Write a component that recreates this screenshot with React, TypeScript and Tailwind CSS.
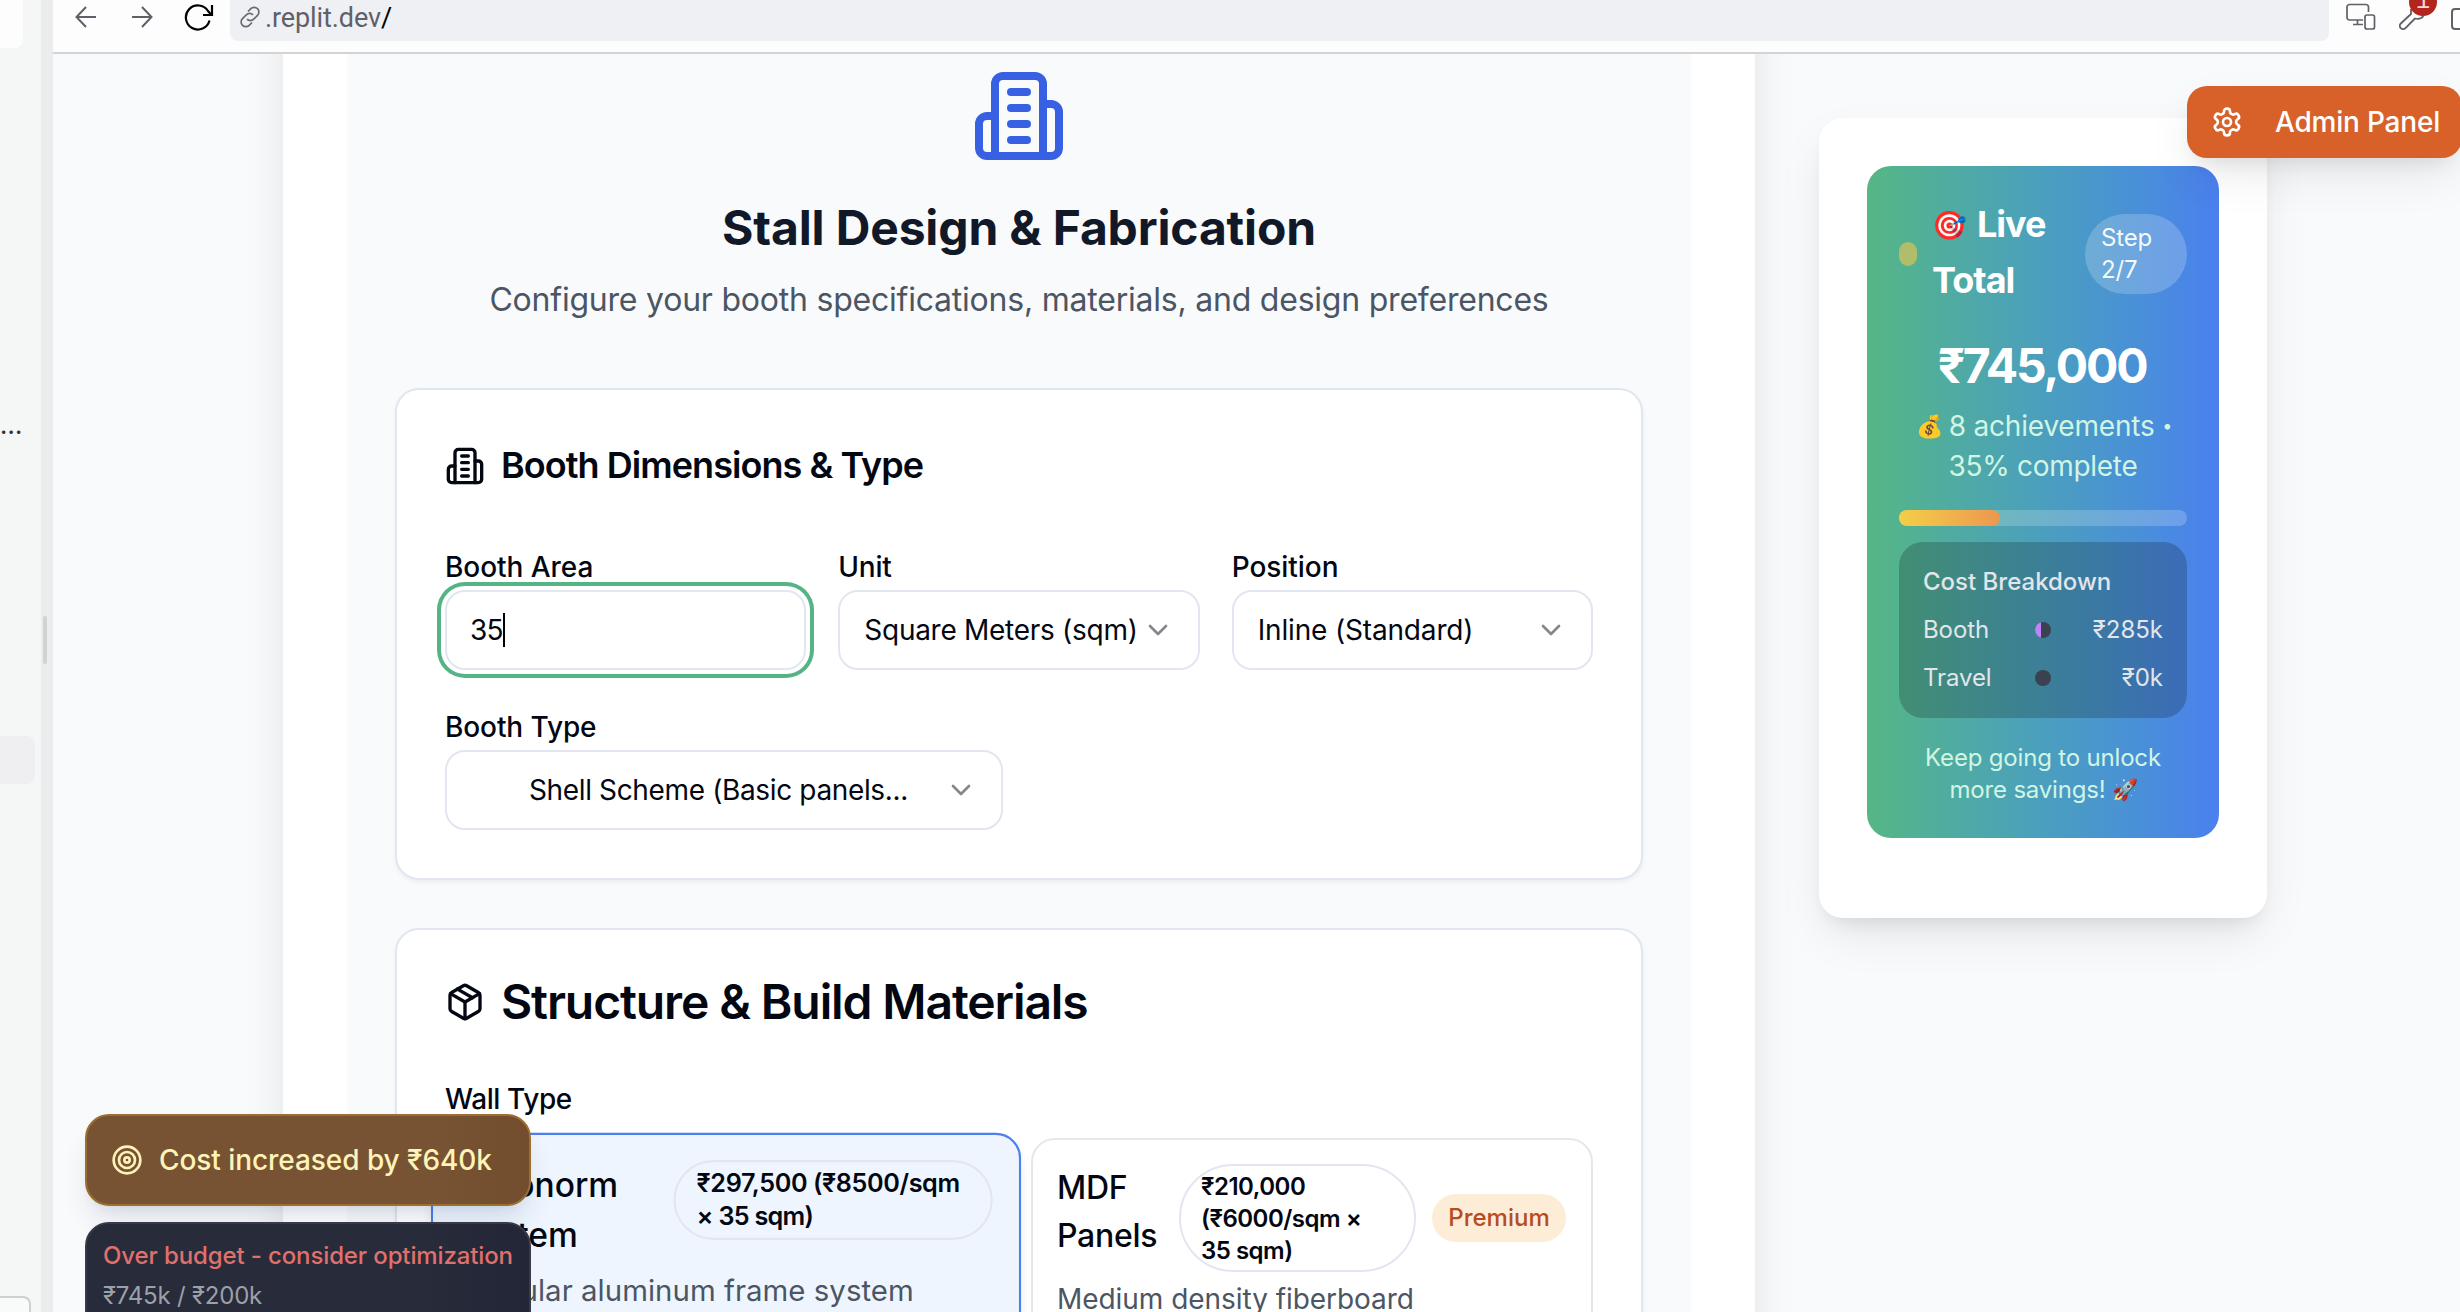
import type { ReactNode } from "react";

const CARD =
  "rounded-[24px] border-2 border-[#e2e6f0] bg-white shadow-[0_2px_4px_rgba(0,0,0,0.06)]";
const SHADOW_XL =
  "shadow-[0_20px_50px_-8px_rgba(0,0,0,0.1),0_12px_20px_-10px_rgba(0,0,0,0.1)]";

function Building({ className }: { className: string }) {
  return (
    <svg
      viewBox="0 0 24 24"
      fill="none"
      stroke="currentColor"
      strokeWidth="2"
      strokeLinecap="round"
      strokeLinejoin="round"
      className={className}
    >
      <path d="M6 22V4a2 2 0 0 1 2-2h8a2 2 0 0 1 2 2v18Z" />
      <path d="M6 12H4a2 2 0 0 0-2 2v6a2 2 0 0 0 2 2h2" />
      <path d="M18 9h2a2 2 0 0 1 2 2v9a2 2 0 0 1-2 2h-2" />
      <path d="M10 6h4M10 10h4M10 14h4M10 18h4" />
    </svg>
  );
}

function PackageBox({ className }: { className: string }) {
  return (
    <svg
      viewBox="0 0 24 24"
      fill="none"
      stroke="currentColor"
      strokeWidth="2"
      strokeLinecap="round"
      strokeLinejoin="round"
      className={className}
    >
      <path d="M11 21.73a2 2 0 0 0 2 0l7-4A2 2 0 0 0 21 16V8a2 2 0 0 0-1-1.73l-7-4a2 2 0 0 0-2 0l-7 4A2 2 0 0 0 3 8v8a2 2 0 0 0 1 1.73z" />
      <path d="M12 22V12" />
      <path d="m3.3 7 8.7 5 8.7-5" />
      <path d="m7.5 4.27 9 5.15" />
    </svg>
  );
}

function Gear() {
  return (
    <svg
      viewBox="0 0 24 24"
      fill="none"
      stroke="currentColor"
      strokeWidth="2"
      strokeLinecap="round"
      strokeLinejoin="round"
      className="size-[32px] shrink-0"
    >
      <path d="M12.22 2h-.44a2 2 0 0 0-2 2v.18a2 2 0 0 1-1 1.73l-.43.25a2 2 0 0 1-2 0l-.15-.08a2 2 0 0 0-2.73.73l-.22.38a2 2 0 0 0 .73 2.73l.15.1a2 2 0 0 1 1 1.72v.51a2 2 0 0 1-1 1.74l-.15.09a2 2 0 0 0-.73 2.73l.22.38a2 2 0 0 0 2.73.73l.15-.08a2 2 0 0 1 2 0l.43.25a2 2 0 0 1 1 1.73V20a2 2 0 0 0 2 2h.44a2 2 0 0 0 2-2v-.18a2 2 0 0 1 1-1.73l.43-.25a2 2 0 0 1 2 0l.15.08a2 2 0 0 0 2.73-.73l.22-.39a2 2 0 0 0-.73-2.73l-.15-.08a2 2 0 0 1-1-1.74v-.5a2 2 0 0 1 1-1.74l.15-.09a2 2 0 0 0 .73-2.73l-.22-.38a2 2 0 0 0-2.73-.73l-.15.08a2 2 0 0 1-2 0l-.43-.25a2 2 0 0 1-1-1.73V4a2 2 0 0 0-2-2z" />
      <circle cx="12" cy="12" r="3" />
    </svg>
  );
}

function Chevron() {
  return (
    <svg
      viewBox="0 0 24 24"
      fill="none"
      stroke="#85878d"
      strokeWidth="2"
      strokeLinecap="round"
      strokeLinejoin="round"
      className="size-[32px] shrink-0"
    >
      <path d="m6 9 6 6 6-6" />
    </svg>
  );
}

function Sidebar() {
  return (
    <div className="flex h-full w-[41px] shrink-0 flex-col overflow-hidden bg-[#f5f7f6]">
      <div className="h-[48px] w-[23px] shrink-0 rounded-br-[8px] bg-[#fcfdfc]" />
      <div className="mt-[366px] h-[24px] shrink-0 text-[24px] leading-[24px] font-medium tracking-[0.2px] text-[#2f3237]">
        ...
      </div>
      <div className="mt-[298px] h-[48px] w-[35px] shrink-0 rounded-r-[8px] bg-[#efeff2]" />
      <div className="mt-[512px] h-[30px] w-[31px] shrink-0 rounded-tr-[8px] border-t-2 border-r-2 border-[#cfcfcf] bg-[#f9fafa]" />
    </div>
  );
}

function Toolbar() {
  return (
    <div className="flex h-[54px] shrink-0 items-start border-b-2 border-[#d4d4d4] bg-[#fdfdfd] pl-[22px]">
      <svg viewBox="0 0 22 22" fill="none" stroke="#5f6068" strokeWidth="2" className="mt-[6px] size-[22px] shrink-0">
        <path d="M21 11H1.5M11 1 1.5 11l9.5 10" />
      </svg>
      <svg viewBox="0 0 22 22" fill="none" stroke="#5f6068" strokeWidth="2" className="mt-[6px] ml-[34px] size-[22px] shrink-0">
        <path d="M1 11h19.500M11 1l9.500 10L11 21" />
      </svg>
      <svg viewBox="0 0 30 28" fill="none" stroke="#000" strokeWidth="2.2" className="mt-[3px] ml-[31px] h-[28px] w-[30px] shrink-0">
        <path d="M25.500 17.500A12 12 0 1 1 24 8l3 3.500" />
        <path d="M28 2v10H19" />
      </svg>
      <div className="ml-[16px] flex h-[41px] w-[2099px] shrink-0 items-start rounded-b-[8px] bg-[#eff0f3] pl-[9px]">
        <svg viewBox="0 0 22 22" fill="none" stroke="#6a6b72" strokeWidth="1.7" className="mt-[6px] size-[22px] shrink-0">
          <path d="M9 5.500 11.800 2.700a4.700 4.700 0 0 1 6.700 0 4.700 4.700 0 0 1 0 6.700l-3.800 3.800a4.700 4.700 0 0 1-6.700 0" />
          <path d="M13 16.500 10.200 19.300a4.700 4.700 0 0 1-6.700 0 4.700 4.700 0 0 1 0-6.700l3.800-3.800a4.700 4.700 0 0 1 6.700 0" />
        </svg>
        <div className="mt-px ml-[4px] font-['Roboto',sans-serif] text-[27px] leading-[34px] tracking-[-0.1px] text-[#5f6068]">
          .replit.dev<span className="text-black">/</span>
        </div>
      </div>
      <svg viewBox="0 0 30 28" fill="none" stroke="#5f6068" strokeWidth="1.7" className="mt-[3px] ml-[17px] h-[28px] w-[30px] shrink-0">
        <path d="M22.500 9V4a2.500 2.500 0 0 0-2.500-2.500H3.500A2.500 2.500 0 0 0 1 4v10.500A2.500 2.500 0 0 0 3.500 17H17M11.500 17v4.500M7 21.500h10" />
        <rect x="19" y="12" width="9.500" height="14" rx="2" />
      </svg>
      <div className="relative ml-[23px] h-[32px] w-[40px] shrink-0">
        <svg viewBox="0 0 32 32" fill="none" stroke="#5f6068" strokeWidth="1.8" strokeLinejoin="round" className="size-[32px]">
          <path d="M12 9 12 14 1.800 23.500a3.300 3.300 0 0 0 4.700 4.700L16 18.500c3 .8 6 .5 8.500-2.500" />
        </svg>
        <div className="absolute -top-[12px] left-[10px] flex size-[28px] items-center justify-center rounded-full bg-[#b3261e]">
          <span className="font-['Liberation_Mono',monospace] text-[24px] leading-[26px] text-[#f9d9d7]">1</span>
        </div>
      </div>
      <div className="mt-[8px] ml-[12px] h-[22px] w-[30px] shrink-0 rounded-[4px] border-2 border-[#5f6068]" />
    </div>
  );
}

function Label({ className, children }: { className: string; children: ReactNode }) {
  return <div className={`pt-px text-[28px] leading-[28px] font-medium ${className}`}>{children}</div>;
}

function SelectBox({ className, children }: { className: string; children: ReactNode }) {
  return (
    <div
      className={`mt-[9px] flex h-[80px] items-center justify-between rounded-[20px] border-2 border-[#e2e6f0] bg-white pr-[24px] pl-[24px] text-[28px] leading-[40px] whitespace-nowrap ${className}`}
    >
      {children}
      <Chevron />
    </div>
  );
}

function BoothCard() {
  return (
    <div className={`mt-[64px] h-[492px] shrink-0 px-[48px] pt-[46px] ${CARD}`}>
      <div className="flex h-[56px] items-center">
        <Building className="mt-[4px] size-[40px]" />
        <h3 className="mt-px ml-[16px] text-[36px] leading-[56px] font-semibold tracking-[-0.95px]">
          Booth Dimensions &amp; Type
        </h3>
      </div>
      <div className="mt-[60px] grid grid-cols-3 gap-[32px]">
        <div>
          <Label className="tracking-[-0.05px]">Booth Area</Label>
          <div className="mt-[9px] flex h-[80px] items-center rounded-[20px] border-2 border-[#e2e6f0] bg-white pl-[23px] text-[28px] leading-[40px] tracking-[-0.8px] ring-4 ring-[#55b485] ring-offset-4 ring-offset-white">
            35
            <span className="h-[34px] w-[2px] bg-black" />
          </div>
        </div>
        <div>
          <Label className="tracking-[-0.2px]">Unit</Label>
          <SelectBox className="tracking-[-0.28px]">Square Meters (sqm)</SelectBox>
        </div>
        <div>
          <Label className="tracking-[-0.05px]">Position</Label>
          <SelectBox className="tracking-[-0.16px]">Inline (Standard)</SelectBox>
        </div>
      </div>
      <Label className="mt-[42px] tracking-[-0.1px]">Booth Type</Label>
      <SelectBox className="w-[558px] tracking-[-0.36px]">
        <span className="ml-[58px]">Shell Scheme (Basic panels...</span>
      </SelectBox>
    </div>
  );
}

function MaterialsCard() {
  return (
    <div className={`mt-[48px] h-[500px] shrink-0 px-[48px] pt-[38px] ${CARD}`}>
      <div className="flex h-[64px] items-center">
        <PackageBox className="mt-[4px] size-[40px]" />
        <h3 className="mt-[3px] ml-[16px] text-[48px] leading-[64px] font-semibold tracking-[-1.12px]">
          Structure &amp; Build Materials
        </h3>
      </div>
      <Label className="mt-[52px] tracking-[-0.4px]">Wall Type</Label>
      <div className="mt-[25px] grid grid-cols-2 gap-[24px]">
        <div className="h-[208px] scale-105 rounded-[24px] border-2 border-[#4b80ee] bg-[#eef5fe] px-[24px] pt-[22px] shadow-[0_8px_12px_-2px_rgba(0,0,0,0.1)]">
          <div className="flex h-[100px] items-start">
            <div className="mt-[2px] w-[205px] text-[32px] leading-[48px] font-medium tracking-[-0.05px]">
              Octonorm
              <br />
              System
            </div>
            <div className="mt-[2px] w-[304px] shrink-0 rounded-[38px] border-2 border-[#e2e6f0] px-[20px] py-[4px] text-[24px] leading-[32px] font-semibold tracking-[-0.38px] whitespace-nowrap">
              ₹297,500 (₹8500/sqm
              <br />
              <span className="tracking-[-0.7px]">× 35 sqm)</span>
            </div>
          </div>
          <div className="mt-[6px] text-[28px] leading-[40px] tracking-[0.03px] whitespace-nowrap text-[#4b5563]">
            Modular aluminum frame system
          </div>
        </div>
        <div className="h-[208px] rounded-[24px] border-2 border-[#e5e7eb] bg-white px-[24px] pt-[24px]">
          <div className="flex h-[108px] items-center">
            <div className="-mt-[12px] w-[122px] text-[32px] leading-[48px] font-medium tracking-[-0.3px]">
              MDF
              <br />
              Panels
            </div>
            <div className="w-[237px] shrink-0 rounded-[54px] border-2 border-[#e2e6f0] px-[20px] pt-[5px] pb-[3px] text-[24px] leading-[32px] font-semibold tracking-[-0.5px] whitespace-nowrap">
              ₹210,000
              <br />
              (₹6000/sqm ×
              <br />
              35 sqm)
            </div>
            <div className="ml-[16px] h-[48px] w-[134px] shrink-0 rounded-[24px] bg-[#fdedd6] text-center text-[24px] leading-[48px] font-medium text-[#b64c22]">
              Premium
            </div>
          </div>
          <div className="mt-[7px] text-[28px] leading-[40px] tracking-[-0.05px] text-[#4b5563]">
            Medium density fiberboard
          </div>
        </div>
      </div>
    </div>
  );
}

function CostRow({ name, value, filled }: { name: string; value: string; filled: boolean }) {
  return (
    <div className="mt-[16px] flex h-[32px] items-center text-[24px] leading-[32px] tracking-[-0.1px]">
      <span className="w-[112px]">{name}</span>
      <span className="flex size-[16px] overflow-hidden rounded-full bg-[#3b4150]">
        {filled && <span className="h-full w-[6px] bg-[#bb85f5]" />}
      </span>
      <span className="ml-auto tracking-[0px]">{value}</span>
    </div>
  );
}

function TotalCard() {
  return (
    <div className={`mt-[64px] ml-[64px] h-[800px] w-[448px] shrink-0 rounded-[24px] bg-white p-[48px] ${SHADOW_XL}`}>
      <div className="h-[672px] rounded-[24px] bg-linear-to-r from-[#56b684] to-[#4b80ee] p-[32px] text-white">
        <div className="flex h-[112px] items-center">
          <div className="h-[24px] w-[18px] rounded-full bg-[#b0bd6a]" />
          <div className="-mt-[4px] ml-[15px] text-[36px] leading-[56px] font-bold tracking-[-1px]">
            <span className="inline-block h-[56px] w-[45px] align-top text-[28px] leading-[59px] tracking-normal">🎯</span>
            Live
            <br />
            Total
          </div>
          <div className="ml-auto w-[102px] rounded-[40px] bg-white/20 px-[16px] py-[8px] text-[24px] leading-[32px] tracking-[-0.18px] text-white/95">
            Step
            <br />
            2/7
          </div>
        </div>
        <div className="mt-[24px] -ml-[2px] text-center text-[48px] leading-[64px] font-bold tracking-[-2.2px]">₹745,000</div>
        <div className="mt-[8px] text-center text-[28px] leading-[40px] tracking-[-0.2px] whitespace-nowrap text-[#d1f5e3]">
          <span className="inline-block h-[40px] w-[33px] text-left align-top text-[22px] tracking-normal">💰</span>8 achievements{" "}
          <span className="inline-block w-[8px] align-top text-[18px]">•</span>
          <br />
          <span className="tracking-[-0.3px]">35% complete</span>
        </div>
        <div className="mt-[24px] h-[16px] rounded-full bg-white/20">
          <div className="h-full w-[101px] rounded-full bg-linear-to-r from-[#f3cf47] to-[#ec974f]" />
        </div>
        <div className="mt-[16px] h-[176px] rounded-[24px] bg-black/20 px-[24px] pt-[24px] text-[#e2e5ea]">
          <div className="text-[24px] leading-[32px] font-medium tracking-[0px]">Cost Breakdown</div>
          <CostRow name="Booth" value="₹285k" filled />
          <CostRow name="Travel" value="₹0k" filled={false} />
        </div>
        <div className="mt-[24px] text-center text-[24px] leading-[32px] tracking-[-0.18px] text-[#d1f5e3]">
          Keep going to unlock
          <br />
          more savings!
          <span className="ml-[6px] inline-block h-[32px] w-[25px] text-left align-top text-[21px]">🚀</span>
        </div>
      </div>
    </div>
  );
}

export default function App() {
  return (
    <div className="relative flex h-[1312px] w-[2460px] overflow-hidden bg-[#f9fafc] font-['Inter',sans-serif] text-[#030712]">
      <Sidebar />
      <div className="flex h-full w-[12px] shrink-0 flex-col items-start bg-[#ebecee] pl-[2px]">
        <div className="mt-[616px] h-[48px] w-[4px] rounded-full bg-[#d2d2d5]" />
      </div>
      <div className="flex h-full w-[2407px] shrink-0 flex-col overflow-hidden">
        <Toolbar />
        <div className="flex h-[1258px] items-start overflow-hidden bg-[#f9fafc] pl-[230px]">
          <main className="-mt-[60px] h-[1460px] w-[1472px] shrink-0 bg-white px-[64px] pt-[60px] shadow-[0_0_44px_-6px_rgba(0,0,0,0.12)]">
            <div className="flex h-full flex-col bg-[#f9fafc] px-[48px] pt-[14px]">
              <Building className="size-[96px] shrink-0 self-center text-[#3761e2]" />
              <h2 className="mt-[32px] text-center text-[48px] leading-[64px] font-bold tracking-[-0.15px] text-[#111827]">
                Stall Design &amp; Fabrication
              </h2>
              <p className="mt-[16px] text-center text-[32px] leading-[48px] tracking-[-0.22px] text-[#4b5563]">
                Configure your booth specifications, materials, and design preferences
              </p>
              <BoothCard />
              <MaterialsCard />
            </div>
          </main>
          <TotalCard />
        </div>
      </div>

      <div
        className={`absolute top-[86px] left-[2187px] flex h-[72px] w-[275px] items-center rounded-[20px] bg-[#d8612a] pl-[24px] text-[28px] leading-[40px] font-medium tracking-[-0.2px] whitespace-nowrap text-white ${SHADOW_XL}`}
      >
        <Gear />
        <span className="ml-[32px]">Admin Panel</span>
      </div>

      <div className="absolute top-[1114px] left-[85px] z-20 flex w-[446px] flex-col gap-[16px]">
        <div className="flex h-[92px] items-center rounded-[24px] border-2 border-[#9c6f30] bg-linear-to-r from-[#775333] from-80% to-[#734d2d] pl-[24px] text-[#fef3b8] shadow-[0_20px_30px_-6px_rgba(20,40,90,0.12),0_8px_12px_-8px_rgba(20,40,90,0.1)]">
          <svg viewBox="0 0 24 24" fill="none" stroke="currentColor" strokeWidth="2" className="size-[32px] shrink-0">
            <circle cx="12" cy="12" r="10" />
            <circle cx="12" cy="12" r="6" />
            <circle cx="12" cy="12" r="2" />
          </svg>
          <span className="ml-[16px] text-[28px] leading-[40px] font-medium tracking-[-0.06px] whitespace-nowrap">
            Cost increased by ₹640k
          </span>
        </div>
        <div className="h-[140px] rounded-[24px] border-2 border-[#363a49] bg-linear-to-r from-[#282b3a] from-75% to-[#232636] px-[16px] pt-[16px] text-[24px] leading-[32px] whitespace-nowrap">
          <div className="font-medium tracking-[-0.12px] text-[#e0706b]">Over budget - consider optimization</div>
          <div className="mt-[8px] tracking-[-0.2px] text-[#9ca0a9]">₹745k / ₹200k</div>
        </div>
      </div>
    </div>
  );
}
